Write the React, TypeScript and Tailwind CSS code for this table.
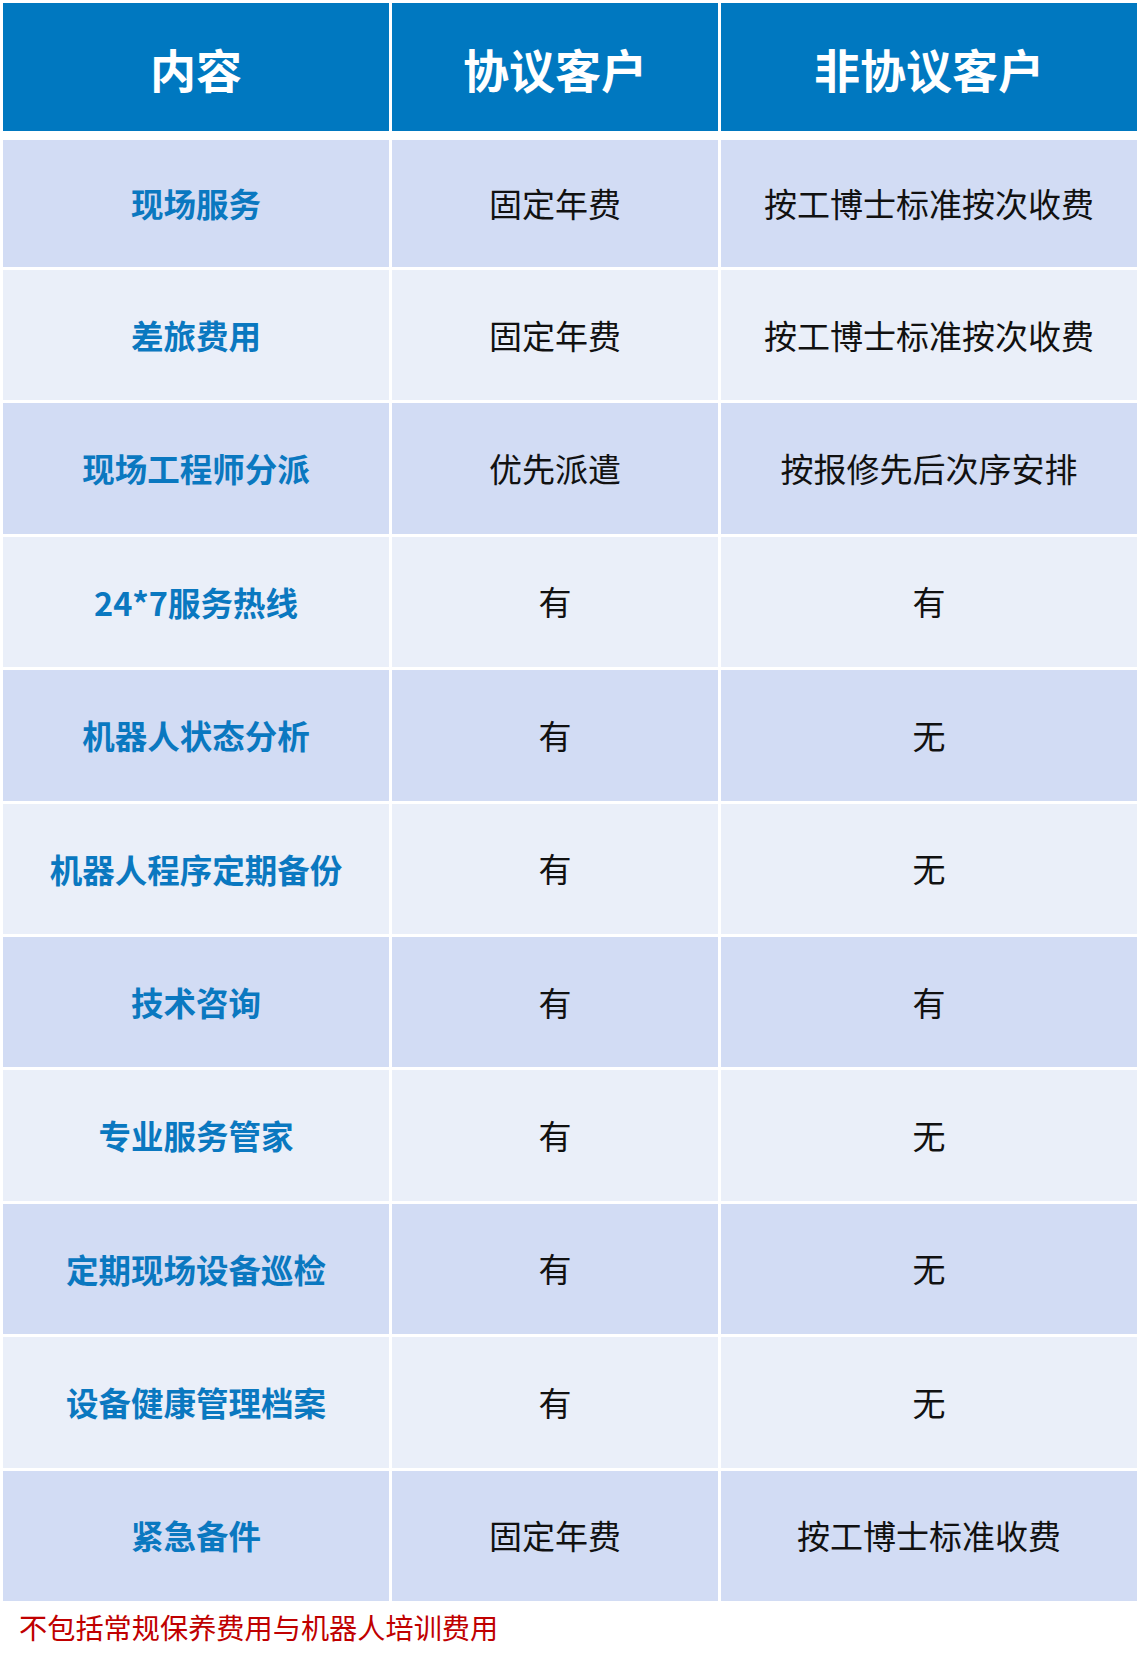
import React from "react";

const rows: [string, string, string][] = [
  ["现场服务", "固定年费", "按工博士标准按次收费"],
  ["差旅费用", "固定年费", "按工博士标准按次收费"],
  ["现场工程师分派", "优先派遣", "按报修先后次序安排"],
  ["24*7服务热线", "有", "有"],
  ["机器人状态分析", "有", "无"],
  ["机器人程序定期备份", "有", "无"],
  ["技术咨询", "有", "有"],
  ["专业服务管家", "有", "无"],
  ["定期现场设备巡检", "有", "无"],
  ["设备健康管理档案", "有", "无"],
  ["紧急备件", "固定年费", "按工博士标准收费"],
];

const font = { fontFamily: '"Microsoft YaHei", "Noto Sans CJK SC", "Noto Sans", sans-serif' };

export default function App() {
  return (
    <div className="w-[1140px] h-[1670px] bg-white" style={font}>
      <div className="flex flex-col px-[3px] pt-[3px]">
        <div className="flex gap-[3px] h-[128px]">
          <div className="w-[386px] bg-[#0078c0] flex items-center justify-center text-white font-bold text-[46px] leading-none pt-[2px]">内容</div>
          <div className="w-[326px] bg-[#0078c0] flex items-center justify-center text-white font-bold text-[46px] leading-none pt-[2px]">协议客户</div>
          <div className="w-[416px] bg-[#0078c0] flex items-center justify-center text-white font-bold text-[46px] leading-none pt-[2px]">非协议客户</div>
        </div>
        <div className="flex flex-col gap-[3px] mt-[9px]">
          {rows.map((r, i) => {
            const bg = i % 2 === 0 ? "bg-[#d2dcf4]" : "bg-[#eaeff9]";
            const h = i === 0 ? "h-[127px]" : "h-[130.4px]";
            return (
              <div key={i} className={`flex gap-[3px] ${h}`}>
                <div className={`w-[386px] ${bg} flex items-center justify-center text-[#0a78c0] font-bold text-[32.5px] leading-none`}>{r[0]}</div>
                <div className={`w-[326px] ${bg} flex items-center justify-center text-[#111] text-[33px] leading-none`}>{r[1]}</div>
                <div className={`w-[416px] ${bg} flex items-center justify-center text-[#111] text-[33px] leading-none`}>{r[2]}</div>
              </div>
            );
          })}
        </div>
        <div className="pl-[16px] pt-[12px] text-[#c00000] text-[28.2px] leading-none">不包括常规保养费用与机器人培训费用</div>
      </div>
    </div>
  );
}
